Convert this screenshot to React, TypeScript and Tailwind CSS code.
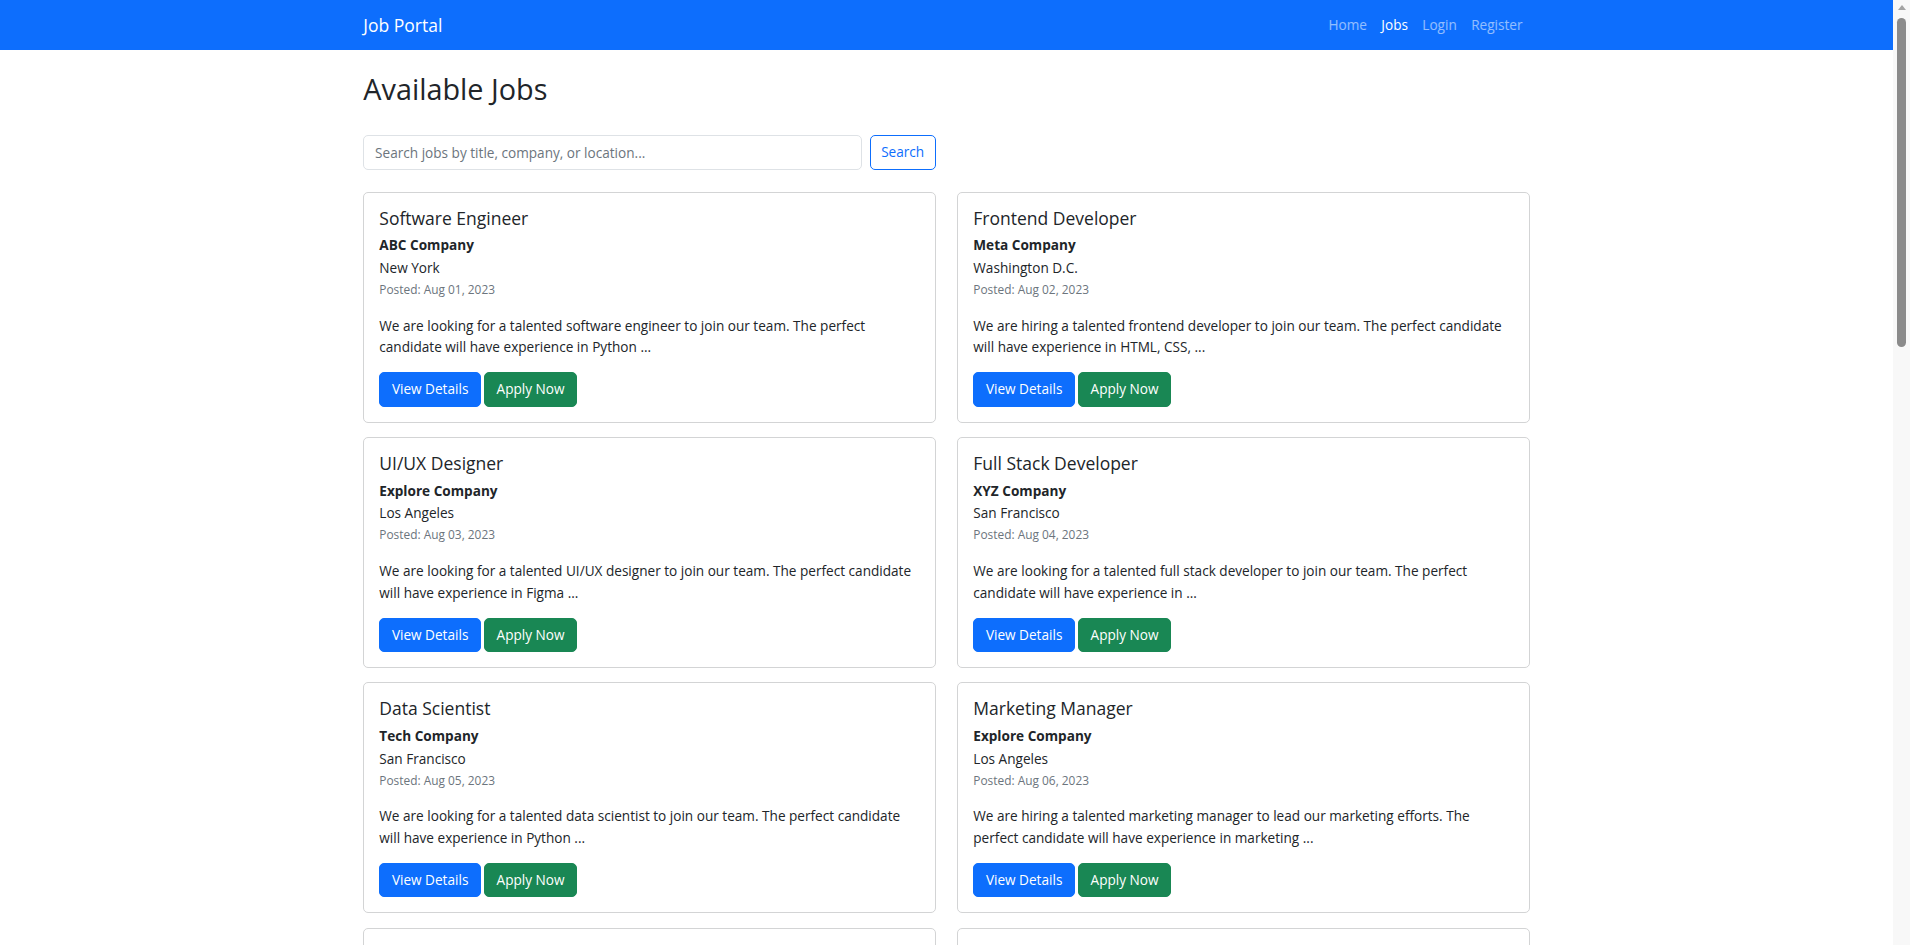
import React from "react";

interface Job {
  id: number;
  title: string;
  company: string;
  location: string;
  posted: string;
  lines: [string, string];
}

const jobs: Job[] = [
  {
    id: 1,
    title: "Software Engineer",
    company: "ABC Company",
    location: "New York",
    posted: "Aug 01, 2023",
    lines: [
      "We are looking for a talented software engineer to join our team. The perfect",
      "candidate will have experience in Python ...",
    ],
  },
  {
    id: 2,
    title: "Frontend Developer",
    company: "Meta Company",
    location: "Washington D.C.",
    posted: "Aug 02, 2023",
    lines: [
      "We are hiring a talented frontend developer to join our team. The perfect candidate",
      "will have experience in HTML, CSS, ...",
    ],
  },
  {
    id: 3,
    title: "UI/UX Designer",
    company: "Explore Company",
    location: "Los Angeles",
    posted: "Aug 03, 2023",
    lines: [
      "We are looking for a talented UI/UX designer to join our team. The perfect candidate",
      "will have experience in Figma ...",
    ],
  },
  {
    id: 4,
    title: "Full Stack Developer",
    company: "XYZ Company",
    location: "San Francisco",
    posted: "Aug 04, 2023",
    lines: [
      "We are looking for a talented full stack developer to join our team. The perfect",
      "candidate will have experience in ...",
    ],
  },
  {
    id: 5,
    title: "Data Scientist",
    company: "Tech Company",
    location: "San Francisco",
    posted: "Aug 05, 2023",
    lines: [
      "We are looking for a talented data scientist to join our team. The perfect candidate",
      "will have experience in Python ...",
    ],
  },
  {
    id: 6,
    title: "Marketing Manager",
    company: "Explore Company",
    location: "Los Angeles",
    posted: "Aug 06, 2023",
    lines: [
      "We are hiring a talented marketing manager to lead our marketing efforts. The",
      "perfect candidate will have experience in marketing ...",
    ],
  },
  {
    id: 7,
    title: "Backend Developer",
    company: "ABC Company",
    location: "New York",
    posted: "Aug 07, 2023",
    lines: [
      "We are looking for a talented backend developer to join our team. The perfect",
      "candidate will have experience in Django ...",
    ],
  },
  {
    id: 8,
    title: "Product Manager",
    company: "Meta Company",
    location: "Washington D.C.",
    posted: "Aug 08, 2023",
    lines: [
      "We are hiring a talented product manager to join our team. The perfect candidate",
      "will have experience in agile ...",
    ],
  },
];

const JobCard = ({ job }: { job: Job }) => (
  <div className="rounded-[5px] border border-[#d3d4d5] bg-white p-[15px]">
    <h5 className="mb-[7px] text-[17.5px] font-medium leading-[21.6px] text-[#212529]">{job.title}</h5>
    <h6 className="mb-[3.6px] text-[13.6px] font-bold leading-[17.3px] text-[#212529]">{job.company}</h6>
    <p className="text-[13.6px] leading-[21.6px] text-[#212529]">{job.location}</p>
    <p className="mb-[14.4px] text-[11.9px] leading-[21.6px] text-[#6c757d]">Posted: {job.posted}</p>
    <p className="mb-[14.4px] text-[13.6px] leading-[21.6px] text-[#212529]">
      {job.lines.map((l) => (
        <span key={l} className="block whitespace-nowrap">
          {l}
        </span>
      ))}
    </p>
    <div className="flex gap-[3px]">
      <button className="h-[34.4px] rounded-[5px] border border-[#0d6efd] bg-[#0d6efd] px-[11.6px] text-[13.6px] text-white">
        View Details
      </button>
      <button className="h-[34.4px] rounded-[5px] border border-[#198754] bg-[#198754] px-[11.6px] text-[13.6px] text-white">
        Apply Now
      </button>
    </div>
  </div>
);

export default function App() {
  return (
    <div className="min-h-screen bg-white pr-[17px] font-['Open_Sans',sans-serif] text-[#212529]">
      {/* navbar */}
      <nav className="h-[50px] bg-[#0d6efd]">
        <div className="mx-auto flex h-full w-[1188px] items-center justify-between px-[10.8px]">
          <a className="text-[17.5px] leading-[27px] text-white">Job Portal</a>
          <ul className="flex text-[13.6px] leading-[21.6px]">
            <li className="px-[7.2px] text-white/55">Home</li>
            <li className="px-[7.2px] text-white">Jobs</li>
            <li className="px-[7.2px] text-white/55">Login</li>
            <li className="px-[7.2px] text-white/55">Register</li>
          </ul>
        </div>
      </nav>

      <main className="mx-auto w-[1188px] px-[10.8px] pt-[21.6px]">
        <h2 className="mb-[29px] text-[28.8px] font-medium leading-[34.6px]">Available Jobs</h2>

        <div className="mb-[22px] flex w-[572.4px] gap-[8px]">
          <input
            placeholder="Search jobs by title, company, or location..."
            className="h-[34.4px] flex-1 rounded-[5px] border border-[#dee2e6] px-[10.8px] text-[13.6px] text-[#212529] outline-none placeholder:text-[#6c757d]"
          />
          <button className="h-[34.4px] w-[66px] rounded-[5px] border border-[#0d6efd] text-[13.6px] text-[#0d6efd]">
            Search
          </button>
        </div>

        <div className="grid grid-cols-2 gap-x-[21.6px] gap-y-[14.4px] pb-8">
          {jobs.map((job) => (
            <JobCard key={job.id} job={job} />
          ))}
        </div>
      </main>

      {/* browser scrollbar */}
      <div className="fixed right-0 top-0 flex h-screen w-[17px] flex-col items-center bg-[#f8f8f8]">
        <div className="mt-[5px] h-0 w-0 border-x-[4px] border-b-[5px] border-x-transparent border-b-[#a3a3a3]" />
        <div className="mt-[8px] h-[329px] w-[9px] rounded-full bg-[#8b8b8b]" />
      </div>
    </div>
  );
}
